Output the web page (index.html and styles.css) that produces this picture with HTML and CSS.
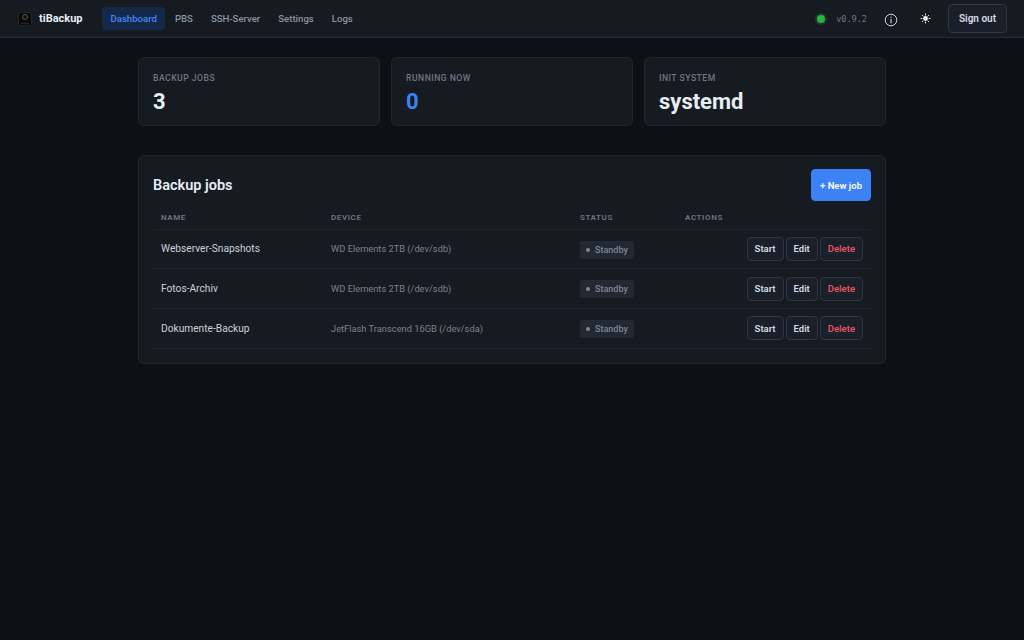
FILE: index.html
```html
<!DOCTYPE html>
<html lang="en">
<head>
    <meta charset="UTF-8">
    <meta name="viewport" content="width=device-width, initial-scale=1.0">
    <title>tiBackup</title>
    <link rel="stylesheet" href="styles.css">
</head>
<body>

    <header class="topbar">
        <div class="brand">
            <svg class="brand-logo" width="14" height="14" viewBox="0 0 14 14">
                <rect x="0.5" y="0.5" width="13" height="13" rx="1.5" fill="#0b0b0b" stroke="#232323"/>
                <circle cx="7" cy="5" r="2.4" fill="none" stroke="#5c5c5c" stroke-width="1"/>
                <rect x="3" y="11" width="8" height="1" fill="#262626"/>
            </svg>
            <span>tiBackup</span>
        </div>
        <nav class="nav">
            <a class="nav-link active">Dashboard</a>
            <a class="nav-link">PBS</a>
            <a class="nav-link">SSH-Server</a>
            <a class="nav-link">Settings</a>
            <a class="nav-link">Logs</a>
        </nav>
        <div class="topbar-right">
            <span class="status-dot"></span>
            <span class="version">v0.9.2</span>
            <svg class="icon-info" width="14" height="14" viewBox="0 0 14 14">
                <circle cx="7" cy="7" r="5.8" fill="none" stroke="#c9d1d9" stroke-width="1"/>
                <rect x="6.5" y="6" width="1.1" height="4.4" fill="#c9d1d9"/>
                <rect x="6.5" y="3.7" width="1.1" height="1.2" fill="#c9d1d9"/>
            </svg>
            <svg class="icon-sun" width="11" height="11" viewBox="0 0 11 11">
                <circle cx="5.5" cy="5.5" r="2.4" fill="#e6edf3"/>
                <path d="M5.5 0.5v2M5.5 8.5v2M0.5 5.5h2M8.5 5.5h2M2 2l1.4 1.4M7.6 7.6L9 9M2 9l1.4-1.4M7.6 3.4L9 2" stroke="#e6edf3" stroke-width="0.9"/>
            </svg>
            <button class="signout">Sign out</button>
        </div>
    </header>

    <main class="content">
        <section class="stats">
            <div class="stat">
                <div class="stat-label">BACKUP JOBS</div>
                <div class="stat-value">3</div>
            </div>
            <div class="stat">
                <div class="stat-label">RUNNING NOW</div>
                <div class="stat-value blue">0</div>
            </div>
            <div class="stat">
                <div class="stat-label">INIT SYSTEM</div>
                <div class="stat-value">systemd</div>
            </div>
        </section>

        <section class="panel">
            <div class="panel-head">
                <h2>Backup jobs</h2>
                <button class="new-job">+ New job</button>
            </div>
            <table class="jobs">
                <thead>
                    <tr>
                        <th class="col-name">NAME</th>
                        <th class="col-device">DEVICE</th>
                        <th class="col-status">STATUS</th>
                        <th>ACTIONS</th>
                    </tr>
                </thead>
                <tbody>
                    <tr>
                        <td class="job-name">Webserver-Snapshots</td>
                        <td class="job-device">WD Elements 2TB (/dev/sdb)</td>
                        <td><span class="badge"><i></i>Standby</span></td>
                        <td><div class="actions"><button>Start</button><button>Edit</button><button class="danger">Delete</button></div></td>
                    </tr>
                    <tr>
                        <td class="job-name">Fotos-Archiv</td>
                        <td class="job-device">WD Elements 2TB (/dev/sdb)</td>
                        <td><span class="badge"><i></i>Standby</span></td>
                        <td><div class="actions"><button>Start</button><button>Edit</button><button class="danger">Delete</button></div></td>
                    </tr>
                    <tr>
                        <td class="job-name">Dokumente-Backup</td>
                        <td class="job-device">JetFlash Transcend 16GB (/dev/sda)</td>
                        <td><span class="badge"><i></i>Standby</span></td>
                        <td><div class="actions"><button>Start</button><button>Edit</button><button class="danger">Delete</button></div></td>
                    </tr>
                </tbody>
            </table>
        </section>
    </main>

</body>
</html>
```

FILE: styles.css
```css
* {
    box-sizing: border-box;
}

body {
    margin: 0;
    min-height: 640px;
    background: #0d1117;
    color: #e6edf3;
    font-family: Roboto, "Liberation Sans", sans-serif;
}

button {
    font-family: inherit;
}

.topbar {
    display: flex;
    align-items: center;
    height: 38px;
    padding: 0 17px 0 18px;
    background: #161b22;
    border-bottom: 1px solid #262c35;
}

.brand {
    display: flex;
    align-items: center;
    gap: 7px;
    width: 84px;
    font-size: 11px;
    font-weight: 700;
}

.brand-logo {
    flex: none;
}

.nav {
    display: flex;
    align-items: center;
    gap: 1px;
}

.nav-link {
    padding: 6px 8.5px;
    border-radius: 4px;
    font-size: 9.6px;
    font-weight: 500;
    color: #8b949e;
}

.nav-link.active {
    background: #14284a;
    color: #4287f5;
}

.topbar-right {
    display: flex;
    align-items: center;
    margin-left: auto;
}

.status-dot {
    width: 8px;
    height: 8px;
    margin-right: 11px;
    border-radius: 50%;
    background: #2fb344;
    box-shadow: 0 0 0 2px rgba(47, 179, 68, 0.2);
}

.version {
    margin-right: 17px;
    font-family: "DejaVu Sans Mono", monospace;
    font-size: 8.5px;
    color: #6e7681;
}

.icon-info {
    margin: 3px 22px 0 0;
}

.icon-sun {
    margin: 0 17px 1px 0;
}

.signout {
    height: 29px;
    padding: 0 10px;
    background: #1a2029;
    border: 1px solid #30363d;
    border-radius: 4px;
    color: #d5dce3;
    font-size: 10px;
    font-weight: 600;
}

.content {
    width: 748px;
    margin: 0 auto;
    padding-top: 19px;
}

.stats {
    display: grid;
    grid-template-columns: repeat(3, 1fr);
    gap: 11px;
    margin-bottom: 29px;
}

.stat {
    height: 69px;
    padding: 15px 14px;
    background: #161b22;
    border: 1px solid #21262d;
    border-radius: 6px;
}

.stat-label {
    font-size: 8.6px;
    font-weight: 500;
    letter-spacing: 0.5px;
    color: #6e7681;
}

.stat-value {
    margin-top: 6px;
    font-size: 22px;
    font-weight: 700;
    color: #e6edf3;
}

.stat-value.blue {
    color: #3b82f6;
}

.panel {
    height: 209px;
    padding: 13px 14px;
    background: #161b22;
    border: 1px solid #21262d;
    border-radius: 6px;
}

.panel-head {
    display: flex;
    align-items: center;
    justify-content: space-between;
    margin-bottom: 4px;
}

.panel-head h2 {
    margin: 0;
    font-size: 14.5px;
    font-weight: 600;
}

.new-job {
    height: 32px;
    padding: 0 8px;
    background: #3b82f6;
    border: 1px solid #3b82f6;
    border-radius: 4px;
    color: #fff;
    font-size: 9.5px;
    font-weight: 600;
}

.jobs {
    width: 100%;
    border-collapse: collapse;
}

.jobs th {
    height: 24px;
    padding: 2px 8px 0;
    text-align: left;
    font-size: 8px;
    font-weight: 600;
    letter-spacing: 0.6px;
    color: #6e7681;
    border-bottom: 1px solid #21262d;
}

.jobs td {
    height: 39.7px;
    padding: 0 8px;
    border-bottom: 1px solid #1f252d;
}

.col-name {
    width: 170px;
}

.col-device {
    width: 249px;
}

.col-status {
    width: 105px;
}

.job-name {
    font-size: 10.2px;
    color: #c9d1d9;
}

.job-device {
    font-size: 9.3px;
    color: #7a828c;
}

.badge {
    display: inline-flex;
    align-items: center;
    gap: 5px;
    height: 18px;
    padding: 0 6px;
    vertical-align: middle;
    background: #232933;
    border-radius: 3px;
    font-size: 9px;
    font-weight: 500;
    color: #7d8590;
}

.badge i {
    width: 4px;
    height: 4px;
    border-radius: 50%;
    background: #7d8590;
}

.actions {
    display: flex;
    justify-content: flex-end;
    gap: 2px;
}

.actions button {
    height: 24px;
    padding: 0 7px;
    background: #1a2029;
    border: 1px solid #30363d;
    border-radius: 4px;
    color: #d5dce3;
    font-size: 9.5px;
    font-weight: 600;
}

.actions .danger {
    color: #e5545f;
}
```
